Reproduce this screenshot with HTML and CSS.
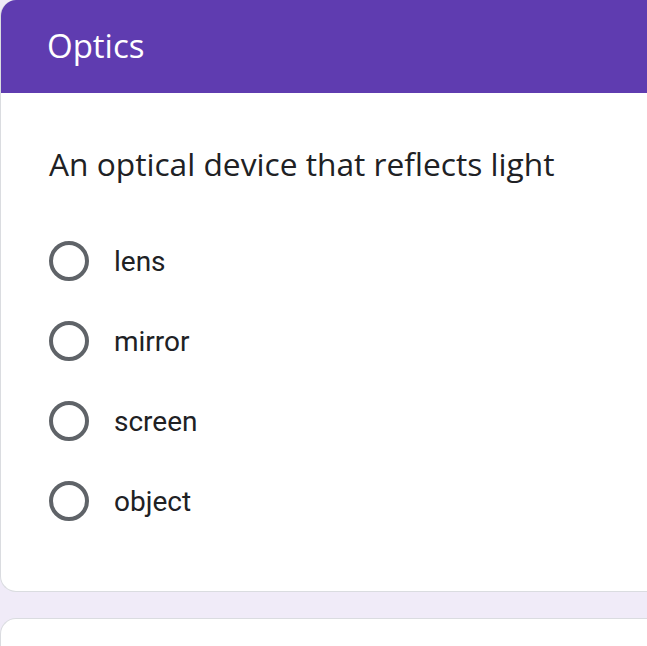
FILE: index.html
```html
<!DOCTYPE html>
<html>
<head>
<meta charset="utf-8">
<link rel="stylesheet" href="styles.css">
</head>
<body>
<div class="page">
  <div class="card main">
    <div class="header"><span class="title">Optics</span></div>
    <div class="body">
      <div class="question">An optical device that reflects light</div>
      <div class="options">
        <div class="option"><span class="radio"></span><span class="label">lens</span></div>
        <div class="option"><span class="radio"></span><span class="label">mirror</span></div>
        <div class="option"><span class="radio"></span><span class="label">screen</span></div>
        <div class="option"><span class="radio"></span><span class="label">object</span></div>
      </div>
    </div>
  </div>
  <div class="card next"></div>
</div>
</body>
</html>
```
FILE: styles.css
```css
html, body {
  margin: 0;
  padding: 0;
  background: #f0ebf8;
  overflow: hidden;
}
.page {
  width: 720px;
  display: flex;
  flex-direction: column;
  gap: 26px;
}
.card {
  background: #fff;
  border: 1px solid #dadce0;
  border-right: none;
  border-radius: 16px 0 0 16px;
  box-sizing: border-box;
  overflow: hidden;
}
.main {
  height: 592px;
  border-top: none;
}
.next {
  height: 60px;
}
.header {
  background: #5f3cb0;
  height: 93px;
  display: flex;
  align-items: center;
  padding-left: 47px;
  margin-left: -1px;
  border-top-left-radius: 8px;
}
.title {
  color: #fff;
  font-family: "Open Sans", sans-serif;
  font-size: 33px;
  margin-top: -3px;
}
.body {
  padding: 50px 0 0 48px;
}
.question {
  font-family: "Open Sans", sans-serif;
  font-size: 31.7px;
  color: #202124;
  line-height: 42px;
}
.options {
  margin-top: 56px;
  display: flex;
  flex-direction: column;
  gap: 40px;
}
.option {
  display: flex;
  align-items: center;
  height: 40px;
}
.radio {
  width: 40px;
  height: 40px;
  border: 4px solid #5f6368;
  border-radius: 50%;
  box-sizing: border-box;
  flex: none;
}
.label {
  margin-left: 25px;
  font-family: Roboto, sans-serif;
  font-size: 28px;
  color: #202124;
}
```
